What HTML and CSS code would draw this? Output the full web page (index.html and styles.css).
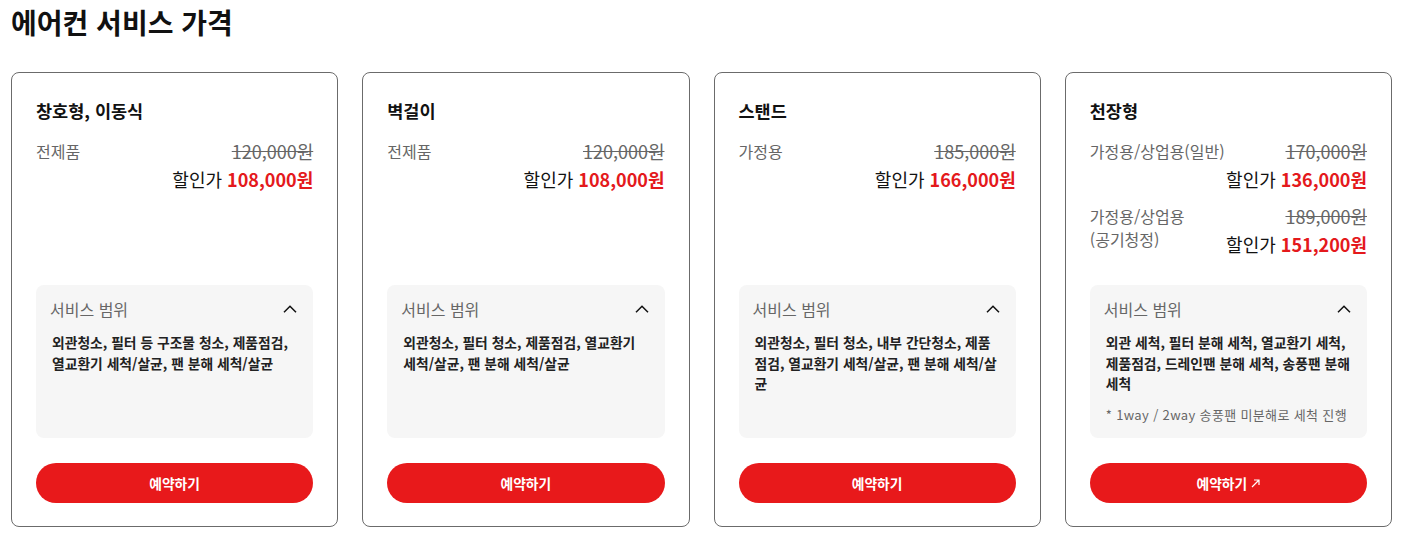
FILE: index.html
```html
<!DOCTYPE html>
<html lang="ko">
<head>
<meta charset="utf-8">
<title>에어컨 서비스 가격</title>
<link rel="stylesheet" href="styles.css">
</head>
<body>
<h1 class="page-title">에어컨 서비스 가격</h1>
<div class="cards">
  <div class="card">
    <h2 class="card-title">창호형, 이동식</h2>
    <div class="prices">
      <div class="group">
        <div class="label">전제품</div>
        <div class="amounts">
          <div class="orig">120,000원</div>
          <div class="sale">할인가 <b>108,000원</b></div>
        </div>
      </div>
    </div>
    <div class="scope">
      <div class="scope-head"><span>서비스 범위</span><svg class="chev" width="14" height="8" viewBox="0 0 14 8"><path d="M1 7.2L7 1.2L13 7.2" fill="none" stroke="#111" stroke-width="1.5"/></svg></div>
      <p class="scope-text">외관청소, 필터 등 구조물 청소, 제품점검, 열교환기 세척/살균, 팬 분해 세척/살균</p>
    </div>
    <a class="btn" href="#">예약하기</a>
  </div>
  <div class="card">
    <h2 class="card-title">벽걸이</h2>
    <div class="prices">
      <div class="group">
        <div class="label">전제품</div>
        <div class="amounts">
          <div class="orig">120,000원</div>
          <div class="sale">할인가 <b>108,000원</b></div>
        </div>
      </div>
    </div>
    <div class="scope">
      <div class="scope-head"><span>서비스 범위</span><svg class="chev" width="14" height="8" viewBox="0 0 14 8"><path d="M1 7.2L7 1.2L13 7.2" fill="none" stroke="#111" stroke-width="1.5"/></svg></div>
      <p class="scope-text">외관청소, 필터 청소, 제품점검, 열교환기 세척/살균, 팬 분해 세척/살균</p>
    </div>
    <a class="btn" href="#">예약하기</a>
  </div>
  <div class="card">
    <h2 class="card-title">스탠드</h2>
    <div class="prices">
      <div class="group">
        <div class="label">가정용</div>
        <div class="amounts">
          <div class="orig">185,000원</div>
          <div class="sale">할인가 <b>166,000원</b></div>
        </div>
      </div>
    </div>
    <div class="scope">
      <div class="scope-head"><span>서비스 범위</span><svg class="chev" width="14" height="8" viewBox="0 0 14 8"><path d="M1 7.2L7 1.2L13 7.2" fill="none" stroke="#111" stroke-width="1.5"/></svg></div>
      <p class="scope-text">외관청소, 필터 청소, 내부 간단청소, 제품점검, 열교환기 세척/살균, 팬 분해 세척/살균</p>
    </div>
    <a class="btn" href="#">예약하기</a>
  </div>
  <div class="card">
    <h2 class="card-title">천장형</h2>
    <div class="prices">
      <div class="group">
        <div class="label">가정용/상업용(일반)</div>
        <div class="amounts">
          <div class="orig">170,000원</div>
          <div class="sale">할인가 <b>136,000원</b></div>
        </div>
      </div>
      <div class="group">
        <div class="label">가정용/상업용<br>(공기청정)</div>
        <div class="amounts">
          <div class="orig">189,000원</div>
          <div class="sale">할인가 <b>151,200원</b></div>
        </div>
      </div>
    </div>
    <div class="scope">
      <div class="scope-head"><span>서비스 범위</span><svg class="chev" width="14" height="8" viewBox="0 0 14 8"><path d="M1 7.2L7 1.2L13 7.2" fill="none" stroke="#111" stroke-width="1.5"/></svg></div>
      <p class="scope-text">외관 세척, 필터 분해 세척, 열교환기 세척, 제품점검, 드레인팬 분해 세척, 송풍팬 분해 세척</p>
      <p class="scope-note">* 1way / 2way 송풍팬 미분해로 세척 진행</p>
    </div>
    <a class="btn" href="#">예약하기<svg class="arrow" width="9" height="9" viewBox="0 0 9 9"><path d="M1 8L8 1M3 1H8V6" fill="none" stroke="#fff" stroke-width="1.2"/></svg></a>
  </div>
</div>
</body>
</html>
```
FILE: styles.css
```css
* { box-sizing: border-box; }
body {
  margin: 0;
  padding: 0 11px;
  background: #fff;
  color: #111;
  font-family: "Noto Sans CJK KR", "Noto Sans", sans-serif;
}
.page-title {
  margin: 4px 0 0;
  font-size: 28px;
  line-height: 36px;
  font-weight: 700;
}
.cards {
  margin-top: 32px;
  display: grid;
  grid-template-columns: repeat(4, 1fr);
  gap: 24px;
}
.card {
  border: 1px solid #6b6b6b;
  border-radius: 8px;
  padding: 24px 24px 23px;
  display: flex;
  flex-direction: column;
}
.card-title {
  margin: 0;
  font-size: 17.5px;
  line-height: 28px;
  font-weight: 700;
}
.prices {
  margin-top: 12px;
  flex: 1;
  display: flex;
  flex-direction: column;
  gap: 9px;
}
.group {
  display: flex;
  justify-content: space-between;
  align-items: flex-start;
}
.label {
  font-size: 16px;
  line-height: 23px;
  padding-top: 3px;
  color: #666;
}
.amounts { text-align: right; }
.orig {
  font-size: 18px;
  line-height: 28px;
  color: #666;
  text-decoration: line-through;
}
.sale {
  font-size: 18px;
  line-height: 28px;
  color: #111;
}
.sale b { color: #e4191c; font-weight: 700; }
.scope {
  margin-top: 27px;
  background: #f6f6f6;
  border-radius: 8px;
  padding: 12px 17px 13px 14px;
  height: 153px;
}
.scope-head {
  display: flex;
  justify-content: space-between;
  align-items: center;
  height: 24px;
  font-size: 16px;
  color: #666;
}
.chev { margin-top: -1px; margin-right: -1px; }
.scope-text {
  margin: 11px 0 0 2px;
  font-size: 13.8px;
  line-height: 20.5px;
  font-weight: 700;
  color: #222;
}
.scope-note {
  margin: 11px 0 0 2px;
  font-size: 13px;
  line-height: 20px;
  color: #666;
  letter-spacing: 0.35px;
}
.btn {
  margin-top: 25px;
  height: 40px;
  border-radius: 20px;
  background: #e8191b;
  color: #fff;
  font-size: 13.8px;
  font-weight: 700;
  text-decoration: none;
  display: flex;
  align-items: center;
  justify-content: center;
  gap: 4px;
}
.arrow { margin-top: 1px; }
```
